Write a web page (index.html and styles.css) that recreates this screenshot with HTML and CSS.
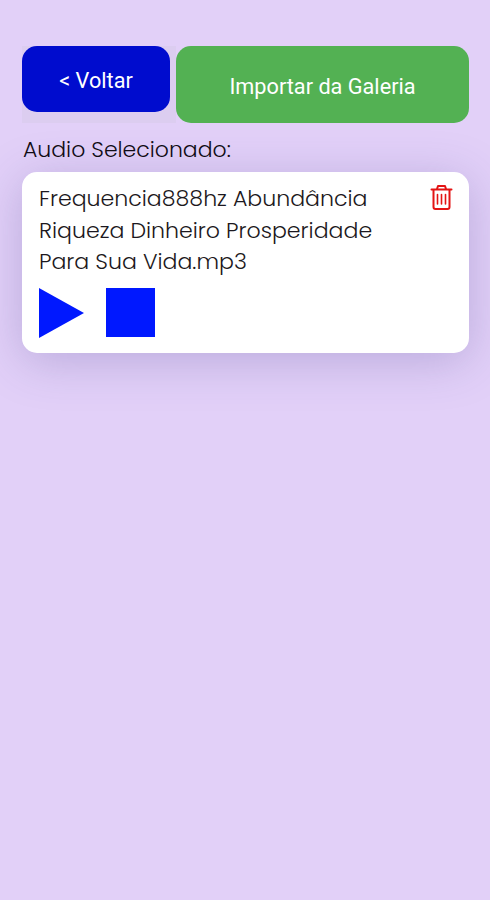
FILE: index.html
```html
<!DOCTYPE html>
<html lang="pt-BR">
<head>
	<meta charset="UTF-8">
	<meta name="viewport" content="width=device-width, initial-scale=1">
	<title>Audio</title>
	<link rel="stylesheet" href="styles.css">
</head>
<body>
	<!-- Top buttons -->
	<div class="actions">
		<div class="back-wrap">
			<button type="button" class="btn btn-back">&lt; Voltar</button>
		</div>
		<button type="button" class="btn btn-import">Importar da Galeria</button>
	</div>

	<!-- Selected audio -->
	<h2 class="label">Audio Selecionado:</h2>
	<section class="card">
		<div class="card-top">
			<p class="file-name">Frequencia888hz Abundância Riqueza Dinheiro Prosperidade Para Sua Vida.mp3</p>
			<button type="button" class="icon-btn" aria-label="Excluir">
				<svg class="trash" viewBox="0 0 23 27" fill="none" stroke="#e31414" stroke-width="2" stroke-linejoin="round" stroke-linecap="round">
					<path d="M1.500 5.500H21.500M7 5L8 2H15L16 5M3.500 6V23Q3.500 25 5.500 25H17.500Q19.500 25 19.500 23V6"/>
					<path d="M7.500 10.500V20M11.500 10.500V20M15.500 10.500V20" stroke-width="1.600"/>
				</svg>
			</button>
		</div>
		<div class="controls">
			<button type="button" class="icon-btn" aria-label="Tocar">
				<svg class="play" viewBox="0 0 45 50"><path d="M0 0L45 25L0 50Z" fill="#0018ff"/></svg>
			</button>
			<button type="button" class="icon-btn stop" aria-label="Parar"></button>
		</div>
	</section>
</body>
</html>
```

FILE: styles.css
```css
* {
	box-sizing: border-box;
}

body {
	margin: 0;
	min-height: 900px;
	padding: 46px 21px 0 22px;
	background-color: #e2d0f8;
	color: #1c1820;
	font-family: Poppins, Inter, sans-serif;
	font-weight: 300;
}

button {
	border: none;
	padding: 0;
	cursor: pointer;
}

.actions {
	display: flex;
	height: 77px;
}

.back-wrap {
	width: 154px;
	background-color: #dccdf0;
}

.btn {
	border-radius: 15px;
	color: #fff;
	font-family: Roboto, sans-serif;
	font-size: 21.7px;
}

.btn-back {
	display: block;
	width: 148px;
	height: 66px;
	padding-top: 3px;
	background-color: #000cce;
}

.btn-import {
	flex: 1;
	padding-top: 3px;
	background-color: #53b153;
}

.label {
	margin: 10px 0 6px 1px;
	font-size: 22px;
	line-height: 33px;
	font-weight: 300;
	color: #100c14;
}

.card {
	height: 181px;
	padding: 11px 16px 0 17px;
	border-radius: 15px;
	background-color: #fff;
	box-shadow: 0 8px 48px rgba(70, 60, 140, 0.26);
}

.card-top {
	display: flex;
	justify-content: space-between;
}

.file-name {
	width: 350px;
	margin: 0;
	font-size: 22.1px;
	line-height: 31.6px;
}

.icon-btn {
	display: block;
	background: none;
}

.card-top .icon-btn {
	align-self: flex-start;
	margin-top: 1px;
}

.trash {
	display: block;
	width: 23px;
	height: 27px;
}

.controls {
	display: flex;
	gap: 22px;
	margin-top: 10px;
}

.play {
	display: block;
	width: 45px;
	height: 50px;
}

.controls .stop {
	width: 49px;
	height: 49px;
	background-color: #0018ff;
}
```
